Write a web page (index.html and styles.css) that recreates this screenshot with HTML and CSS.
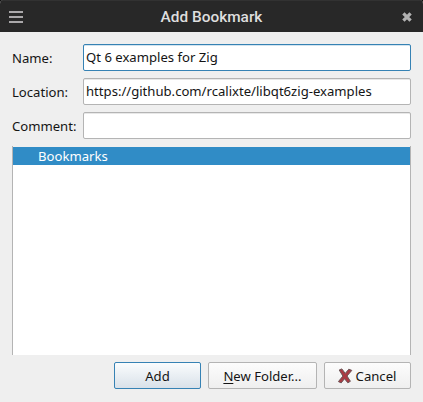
FILE: index.html
```html
<!DOCTYPE html>
<html lang="en">
<head>
<meta charset="utf-8">
<title>Add Bookmark</title>
<link rel="stylesheet" href="styles.css">
</head>
<body>
<div class="window">
  <header class="titlebar">
    <span class="menu-icon"><i></i><i></i><i></i></span>
    <h1 class="title">Add Bookmark</h1>
    <svg class="close-icon" width="10" height="10" viewBox="0 0 10 10"><path d="M1.4 1.4 8.6 8.6M8.6 1.4 1.4 8.6" stroke="#b2b2b2" stroke-width="3.3"/></svg>
  </header>
  <main class="content">
    <div class="form">
      <span class="label">Name:</span><div class="field focused">Qt 6 examples for Zig</div>
      <span class="label">Location:</span><div class="field">https://github.com/rcalixte/libqt6zig-examples</div>
      <span class="label">Comment:</span><div class="field"></div>
    </div>
    <div class="tree"><div class="row">Bookmarks</div></div>
    <div class="buttons">
      <button class="button add">Add</button>
      <button class="button folder"><span><span class="key">N</span>ew Folder...</span></button>
      <button class="button cancel"><svg class="cancel-icon" width="16" height="16" viewBox="0 0 16 16"><path d="M2.2 2 4.8.9Q6.5 3 8.2 5.4L11.8 1.2 14.8 2.4 10 8 13.4 13.3 10.8 14.8 7.5 10.7 4.2 14.9 1.4 13.6 5.9 8.1Z" fill="#ab3a43" stroke="#6b5557" stroke-width="1" stroke-linejoin="round"/></svg><span>Cancel</span></button>
    </div>
  </main>
</div>
</body>
</html>
```
FILE: styles.css
```css
* { box-sizing: border-box; }
body { margin: 0; background: #111; }
.window {
  width: 423px;
  height: 402px;
  background: #efefef;
  border-radius: 4px 4px 0 0;
  overflow: hidden;
  font: 13.12px/18px "Noto Sans", sans-serif;
  color: #141414;
}
.titlebar {
  display: flex;
  align-items: center;
  justify-content: space-between;
  height: 32px;
  padding: 0 11px 0 9px;
  background: #282828;
  border-top: 1px solid #323232;
}
.menu-icon { display: grid; gap: 3px; width: 14px; }
.menu-icon i { height: 2px; background: #aaa8aa; }
.title {
  margin: 0 2px 0 0;
  font: 500 15.4px/20px Roboto, sans-serif;
  color: #dedede;
}
.content { padding: 12px 12px 0; }
.form {
  display: grid;
  grid-template-columns: 71px 328px;
  grid-auto-rows: 27px;
  row-gap: 7px;
}
.label { line-height: 29px; }
.field {
  height: 27px;
  padding: 0 2px;
  line-height: 25px;
  background: #fff;
  border: 1px solid #b4b4b4;
  border-radius: 2px;
  box-shadow: inset 0 1px #e8e8e8;
}
.focused { border-color: #3682b4; box-shadow: inset 0 1px #d3e4ef; }
.tree {
  width: 399px;
  height: 209px;
  margin-top: 7px;
  padding-top: 1px;
  background: linear-gradient(#efefef 1px, #fff 1px);
  border: solid #b4b4b4;
  border-width: 0 1px;
}
.row {
  height: 18px;
  padding-left: 25px;
  background: #308cc6;
  color: #fff;
}
.buttons {
  display: flex;
  justify-content: flex-end;
  gap: 7px;
  width: 399px;
  margin-top: 7px;
}
.button {
  display: flex;
  align-items: center;
  justify-content: center;
  width: 87px;
  height: 27px;
  padding: 0;
  font: inherit;
  line-height: 18px;
  color: #141414;
  background: linear-gradient(#fcfcfc, #efefef);
  border: 1px solid #b4b4b4;
  border-radius: 2px;
}
.add { background: linear-gradient(#fafcfd, #d9e1e9); border-color: #3682b4; }
.folder { width: 109px; }
.cancel { padding-right: 2px; }
.key { text-decoration: underline 1px; text-underline-offset: 2px; }
.cancel-icon { margin-right: 3px; }
```
